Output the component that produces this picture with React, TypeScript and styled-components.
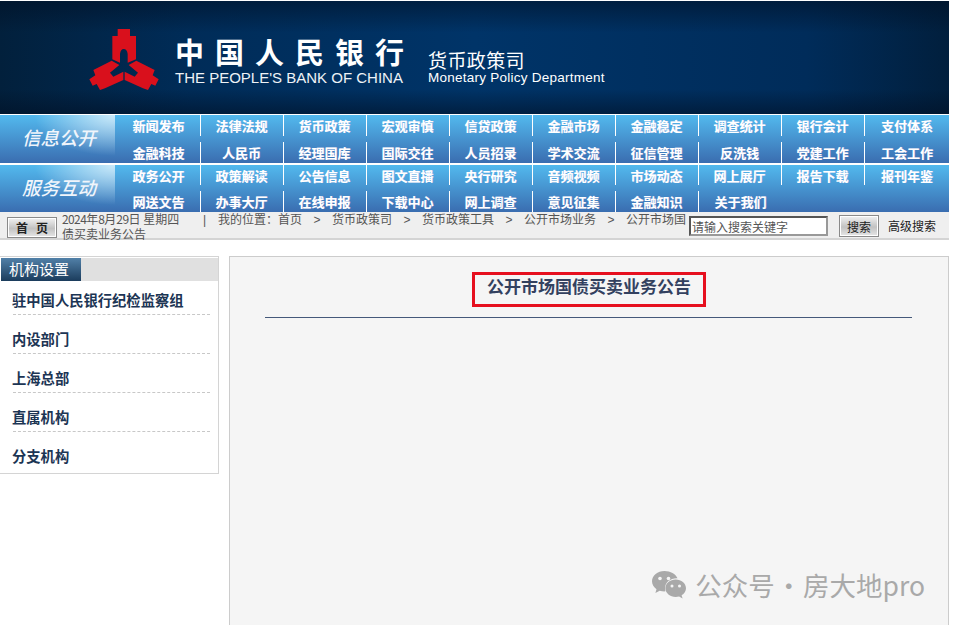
import React from 'react';
import styled, { createGlobalStyle } from 'styled-components';

const CJK = `'Noto Sans CJK SC', 'Liberation Sans', sans-serif`;

const GlobalStyle = createGlobalStyle`
  html, body {
    margin: 0;
    padding: 0;
    height: 625px;
    overflow: hidden;
    background: #fff;
    font-family: ${CJK};
  }
`;

const Page = styled.div`
  width: 949px;
  height: 625px;
  display: flex;
  flex-direction: column;
  overflow: hidden;
`;

const Banner = styled.header`
  flex: 0 0 113px;
  margin-top: 1px;
  display: flex;
  align-items: flex-start;
  padding: 19px 0 0 80px;
  box-sizing: border-box;
  background:
    linear-gradient(to bottom, rgba(0, 15, 35, 0.55), transparent 28%, transparent 78%, rgba(0, 15, 35, 0.55)),
    linear-gradient(to right, #02203c 0, #002c58 20%, #003468 50%, #002c5a 85%, #011f3d 100%);
`;

const LogoMark = styled.svg`
  width: 90px;
  height: 80px;
  flex: none;
`;

const BankName = styled.div`
  margin: 15px 0 0 5px;
  width: 238px;
  color: #fff;
`;

const BankCn = styled.div`
  font-size: 29px;
  line-height: 32px;
  font-weight: 700;
  letter-spacing: 11px;
  white-space: nowrap;
`;

const BankEn = styled.div`
  font-family: 'Liberation Sans', sans-serif;
  font-size: 15px;
  line-height: 18px;
  margin-top: 2px;
  color: #eef2f6;
  white-space: nowrap;
`;

const DeptName = styled.div`
  margin: 29px 0 0 15px;
  color: #fff;
`;

const DeptCn = styled.div`
  font-size: 19px;
  line-height: 22px;
  letter-spacing: 0.4px;
`;

const DeptEn = styled.div`
  font-family: 'Liberation Sans', sans-serif;
  font-size: 13.5px;
  line-height: 14px;
  letter-spacing: 0.25px;
  white-space: nowrap;
`;

const Nav = styled.nav`
  flex: none;
  display: flex;
  flex-direction: column;
  gap: 2px;
  padding-top: 1px;
`;

const Band = styled.div<{ $rows: string }>`
  display: grid;
  grid-template-columns: 115px 1fr;
  height: ${(p) => (p.$rows === 'a' ? 48 : 47)}px;
  background: linear-gradient(to bottom, #52b9ee, #3a6db0);
`;

const BandLabel = styled.div`
  display: flex;
  align-items: center;
  justify-content: center;
  padding: 0 0 4px 3px;
  box-sizing: border-box;
  color: #f0f5fb;
  font-size: 18.5px;
  font-weight: 500;
  font-style: italic;
  background: radial-gradient(ellipse 70% 85% at 100% 0, rgba(255, 255, 255, 0.7), transparent);
`;

const LinkGrid = styled.div<{ $rows: string }>`
  display: grid;
  grid-template-columns: 86px repeat(8, 83px) 84px;
  grid-template-rows: ${(p) => (p.$rows === 'a' ? '21px 21px' : '20px 21px')};
  row-gap: 6px;
`;

const NavLink = styled.a`
  display: flex;
  align-items: center;
  justify-content: center;
  padding-right: 1px;
  border-right: 1px solid #fff;
  color: #fff;
  font-size: 13px;
  font-weight: 700;
  white-space: nowrap;
  text-shadow: 0.5px 0 0 rgba(255, 210, 240, 0.5);

  &:nth-child(10n + 1) {
    padding: 0 0 0 2px;
  }

  &:nth-child(10n),
  &:last-child {
    padding: 0;
    border-right: none;
  }
`;

const CrumbBar = styled.div`
  flex: 0 0 28px;
  min-height: 0;
  display: flex;
  align-items: flex-start;
  box-sizing: border-box;
  background: #efefef;
  border-bottom: 2px solid #d4d4d4;
`;

const GreyButton = styled.button`
  flex: none;
  padding: 0;
  font-family: ${CJK};
  color: #222;
  border: 1px solid #8a8a8a;
  box-shadow: inset 0 0 0 1px #fff;
  background: linear-gradient(to bottom, #f2f2f2 0, #c2c2c2 55%, #e6e6e6 100%);
`;

const HomeButton = styled(GreyButton)`
  width: 50px;
  height: 21px;
  margin: 5px 0 0 7px;
  padding-left: 8px;
  font-size: 12px;
  font-weight: 700;
  letter-spacing: 8px;
  white-space: nowrap;
`;

const Crumbs = styled.div`
  width: 627px;
  margin-left: 5px;
  font-size: 12px;
  line-height: 14px;
  color: #555;
`;

const CrumbLine = styled.div`
  white-space: nowrap;
`;

const DateText = styled.span`
  display: inline-block;
  width: 141px;
`;

const DateNum = styled.span`
  letter-spacing: -0.6px;
`;

const Pipe = styled.span`
  display: inline-block;
  width: 15px;
  font-family: 'Liberation Sans', sans-serif;
`;

const Arrow = styled.span`
  display: inline-block;
  width: 30px;
  text-align: center;
  font-family: 'Liberation Sans', sans-serif;
`;

const SearchInput = styled.input`
  flex: none;
  width: 139px;
  height: 20px;
  margin: 4px 0 0 0;
  padding: 0 1px;
  box-sizing: border-box;
  font-family: ${CJK};
  font-size: 12px;
  background: #fff;
  border-style: solid;
  border-width: 2px;
  border-color: #555 #999 #999 #555;

  &::placeholder {
    color: #555;
    opacity: 1;
  }
`;

const SearchButton = styled(GreyButton)`
  width: 40px;
  height: 22px;
  margin: 3px 0 0 11px;
  font-size: 12px;
`;

const AdvancedLink = styled.a`
  margin: 6px 0 0 9px;
  font-size: 12px;
  line-height: 16px;
  color: #222;
  white-space: nowrap;
`;

const Body = styled.div`
  flex: 1;
  display: flex;
  align-items: flex-start;
  gap: 10px;
  padding-top: 16px;
  min-height: 0;
`;

const Sidebar = styled.aside`
  flex: 0 0 219px;
  box-sizing: border-box;
  border: 1px solid #d4d4d4;
  border-left: none;
  padding: 1px 0 3px 1px;
`;

const SideHead = styled.div`
  background: #e0e0e0;
  height: 23px;
`;

const SideTab = styled.div`
  width: 80px;
  height: 23px;
  line-height: 22px;
  padding-left: 8px;
  box-sizing: border-box;
  font-size: 15px;
  color: #fff;
  white-space: nowrap;
  background: linear-gradient(to bottom, #5180a8, #1b3c5c);
`;

const SideList = styled.ul`
  list-style: none;
  margin: 0;
  padding: 0;
`;

const SideItem = styled.li`
  margin: 0 8px 0 12px;
  padding: 14px 0 4px;
  border-bottom: 1px dashed #c8c8c8;
  font-size: 14.3px;
  line-height: 19px;
  font-weight: 700;
  color: #1c3554;
  white-space: nowrap;

  &:first-child {
    padding-top: 9px;
  }

  &:not(:last-child) {
    padding-bottom: 5px;
  }

  &:last-child {
    padding-bottom: 5px;
    border-bottom: none;
  }

  span {
    margin-left: -1px;
  }
`;

const Content = styled.main`
  position: relative;
  flex: 1;
  align-self: stretch;
  display: flex;
  flex-direction: column;
  align-items: center;
  box-sizing: border-box;
  padding-top: 15px;
  background: #f5f5f5;
  border: 1px solid #ccc;
  border-bottom: none;
`;

const TitleBox = styled.h1`
  margin: 0;
  width: 234px;
  height: 35px;
  box-sizing: border-box;
  display: flex;
  align-items: center;
  justify-content: center;
  padding-bottom: 7px;
  border: 3px solid #e60f1e;
  font-size: 17px;
  line-height: 20px;
  font-weight: 700;
  color: #33415f;
  white-space: nowrap;
`;

const Rule = styled.hr`
  align-self: stretch;
  margin: 10px 36px 0 35px;
  border: none;
  border-top: 1px solid #45597a;
`;

const Watermark = styled.div`
  position: absolute;
  right: 23px;
  bottom: 23px;
  display: flex;
  align-items: center;
  gap: 8px;
  color: #a9a9a9;
  font-size: 26.5px;
  line-height: 34px;
  word-spacing: -5px;
  white-space: nowrap;
`;

const WechatIcon = styled.svg`
  width: 36px;
  height: 30px;
  flex: none;
`;

const topBands = [
  {
    key: 'a',
    label: '信息公开',
    links: [
      '新闻发布', '法律法规', '货币政策', '宏观审慎', '信贷政策', '金融市场', '金融稳定', '调查统计', '银行会计', '支付体系',
      '金融科技', '人民币', '经理国库', '国际交往', '人员招录', '学术交流', '征信管理', '反洗钱', '党建工作', '工会工作',
    ],
  },
  {
    key: 'b',
    label: '服务互动',
    links: [
      '政务公开', '政策解读', '公告信息', '图文直播', '央行研究', '音频视频', '市场动态', '网上展厅', '报告下载', '报刊年鉴',
      '网送文告', '办事大厅', '在线申报', '下载中心', '网上调查', '意见征集', '金融知识', '关于我们',
    ],
  },
];

const sideItems = ['驻中国人民银行纪检监察组', '内设部门', '上海总部', '直属机构', '分支机构'];

const crumbPath = ['货币政策司', '货币政策工具', '公开市场业务', '公开市场国'];

const Logo = () => (
  <LogoMark viewBox="0 0 270 240">
    <g fill="#d9101c">
      <path d="M113 27H150V48H168V118L143 128V102Q141 87 131 87Q122 87 120 102V128L97 118V48H113Z" />
      <path d="M95 122L40 150L46 166L28 178L38 197L50 192L60 210L75 205L130 180V155L100 170L90 158L118 135Z" />
      <path d="M169 122L224 150L218 166L236 178L226 197L214 192L204 210L189 205L134 180V155L164 170L174 158L146 135Z" />
    </g>
  </LogoMark>
);

const Wechat = () => (
  <WechatIcon viewBox="0 0 36 30">
    <path fill="#a9a9a9" d="M13.5 1C6.6 1 1 5.6 1 11.3c0 3.2 1.8 6 4.5 7.9L4.4 23l4.3-2.3c1.5.4 3.1.7 4.8.7.3 0 .7 0 1-.1-.3-1-.5-2-.5-3 0-5.7 5.2-10 11.7-10h.8C24.6 4 19.5 1 13.5 1z" />
    <path fill="#a9a9a9" d="M35 18.3c0-4.8-4.7-8.7-10.3-8.7s-10.3 3.9-10.3 8.7 4.7 8.7 10.3 8.7c1.2 0 2.3-.2 3.4-.5l3.5 2-1-3.2c2.7-1.6 4.4-4.1 4.4-7z" />
    <g fill="#f5f5f5">
      <circle cx="9" cy="8.5" r="1.8" />
      <circle cx="17.5" cy="8.5" r="1.8" />
      <circle cx="21" cy="16" r="1.5" />
      <circle cx="28.5" cy="16" r="1.5" />
    </g>
  </WechatIcon>
);

const App: React.FC = () => (
  <Page>
    <GlobalStyle />
    <Banner>
      <Logo />
      <BankName>
        <BankCn>中国人民银行</BankCn>
        <BankEn>THE PEOPLE'S BANK OF CHINA</BankEn>
      </BankName>
      <DeptName>
        <DeptCn>货币政策司</DeptCn>
        <DeptEn>Monetary Policy Department</DeptEn>
      </DeptName>
    </Banner>
    <Nav>
      {topBands.map((band) => (
        <Band key={band.key} $rows={band.key}>
          <BandLabel>{band.label}</BandLabel>
          <LinkGrid $rows={band.key}>
            {band.links.map((link) => (
              <NavLink key={link}>{link}</NavLink>
            ))}
          </LinkGrid>
        </Band>
      ))}
    </Nav>
    <CrumbBar>
      <HomeButton>首页</HomeButton>
      <Crumbs>
        <CrumbLine>
          <DateText>
            <DateNum>2024</DateNum>年<DateNum>8</DateNum>月<DateNum>29</DateNum>日&nbsp;星期四
          </DateText>
          <Pipe>|</Pipe>
          我的位置：首页
          {crumbPath.map((part) => (
            <React.Fragment key={part}>
              <Arrow>&gt;</Arrow>
              {part}
            </React.Fragment>
          ))}
        </CrumbLine>
        <CrumbLine>债买卖业务公告</CrumbLine>
      </Crumbs>
      <SearchInput placeholder="请输入搜索关键字" />
      <SearchButton>搜索</SearchButton>
      <AdvancedLink>高级搜索</AdvancedLink>
    </CrumbBar>
    <Body>
      <Sidebar>
        <SideHead>
          <SideTab>机构设置</SideTab>
        </SideHead>
        <SideList>
          {sideItems.map((item) => (
            <SideItem key={item}>
              <span>{item}</span>
            </SideItem>
          ))}
        </SideList>
      </Sidebar>
      <Content>
        <TitleBox>公开市场国债买卖业务公告</TitleBox>
        <Rule />
        <Watermark>
          <Wechat />
          <span>公众号 · 房大地pro</span>
        </Watermark>
      </Content>
    </Body>
  </Page>
);

export default App;
